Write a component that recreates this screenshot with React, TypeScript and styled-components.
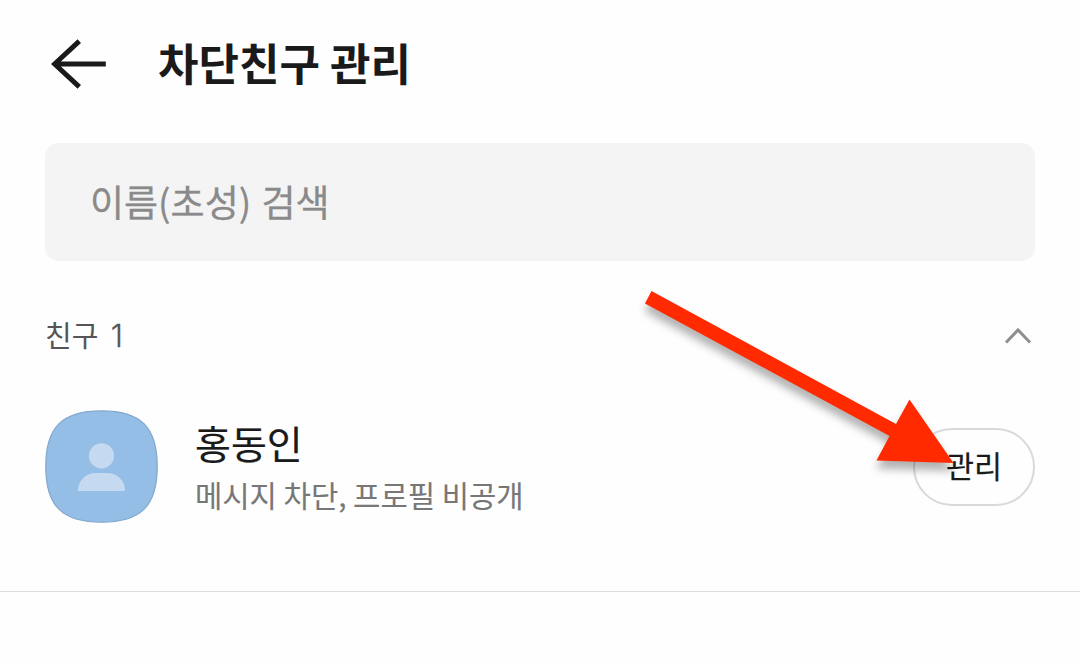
import styled, { createGlobalStyle } from "styled-components";

const GlobalStyle = createGlobalStyle`
  * {
    box-sizing: border-box;
  }

  body {
    margin: 0;
    background-color: #fefefe;
    font-family: "Noto Sans CJK KR", sans-serif;
  }
`;

const PageContainer = styled.main`
  position: relative;
  height: 664px;
  overflow: hidden;
`;

const Header = styled.header`
  height: 143px;
  padding: 32px 45px 0 51px;

  display: flex;
  align-items: flex-start;
`;

const BackButton = styled.button`
  width: 56px;
  height: 64px;
  padding: 0;
  border: none;
  background: none;
`;

const BackIcon = styled.svg`
  display: block;
  width: 56px;
  height: 64px;
`;

const Title = styled.h1`
  margin: 0 0 0 51px;
  color: #1a1a1a;
  font-size: 44px;
  font-weight: 700;
  line-height: 60px;
  white-space: nowrap;
`;

const SearchInput = styled.div`
  height: 118px;
  margin: 0 45px;
  padding: 0 45px 3px;

  display: flex;
  align-items: center;

  background-color: #f4f4f4;
  border-radius: 14px;
  color: #8a8a8a;
  font-size: 37px;
  line-height: 54px;
  word-spacing: 2px;
  white-space: nowrap;
  -webkit-text-stroke: 0.3px #8a8a8a;
`;

const SectionHeader = styled.section`
  height: 44px;
  margin: 53px 45px 0;

  display: flex;
  align-items: center;
  justify-content: space-between;
`;

const SectionTitle = styled.h2`
  margin: 0;
  padding-bottom: 2px;
  color: #555555;
  font-size: 29px;
  font-weight: 400;
  line-height: 40px;
  word-spacing: 6px;
`;

const FriendCount = styled.span`
  font-family: Inter, sans-serif;
  font-size: 31px;
  font-weight: 300;
  -webkit-text-stroke: 0.3px #555555;
`;

const ChevronIcon = styled.svg`
  width: 34px;
  height: 24px;
`;

const FriendRow = styled.article`
  height: 234px;
  padding: 52px 45px 0;

  display: flex;
  align-items: flex-start;

  border-bottom: 1px solid #dddddd;
`;

const Avatar = styled.svg`
  flex: none;
  width: 113px;
  height: 113px;
`;

const FriendInfo = styled.div`
  flex: 1;
  margin: 4px 0 0 37px;

  display: flex;
  flex-direction: column;
`;

const FriendName = styled.strong`
  color: #1a1a1a;
  font-size: 39px;
  font-weight: 400;
  line-height: 56px;
  -webkit-text-stroke: 0.2px #1a1a1a;
`;

const FriendStatus = styled.span`
  color: #777777;
  font-size: 29.7px;
  line-height: 49px;
  white-space: nowrap;
  -webkit-text-stroke: 0.1px #777777;
`;

const ManageButton = styled.button`
  width: 122px;
  height: 78px;
  margin-top: 18px;
  padding: 0 0 4px;

  background-color: #fefefe;
  border: 2px solid #d9d9d9;
  border-radius: 39px;
  color: #1a1a1a;
  font-family: inherit;
  font-size: 30.5px;
  line-height: 44px;
  -webkit-text-stroke: 0.2px #1a1a1a;
`;

const PointerArrow = styled.svg`
  position: absolute;
  top: 0;
  left: 0;
  width: 1080px;
  height: 664px;
  pointer-events: none;
  filter: drop-shadow(0 8px 4px rgba(0, 0, 0, 0.3));
`;

const App = () => {
  return (
    <>
      <GlobalStyle />
      <PageContainer>
        <Header>
          <BackButton aria-label="뒤로">
            <BackIcon viewBox="0 0 56 64" fill="none" stroke="#1a1a1a" strokeWidth="5">
              <path d="M28.3 9.2 3.6 32 28.3 54.8M3.6 32H54.8" />
            </BackIcon>
          </BackButton>
          <Title>차단친구 관리</Title>
        </Header>
        <SearchInput>이름(초성) 검색</SearchInput>
        <SectionHeader>
          <SectionTitle>
            친구 <FriendCount>1</FriendCount>
          </SectionTitle>
          <ChevronIcon viewBox="0 0 34 24" fill="none" stroke="#8f8f8f" strokeWidth="3">
            <path d="M5 18.5 17 6 29 18.5" />
          </ChevronIcon>
        </SectionHeader>
        <FriendRow>
          <Avatar viewBox="0 0 113 113">
            <path
              d="M56.5 .8C96 .8 112.2 17 112.2 56.5S96 112.2 56.5 112.2.8 96 .8 56.5 17 .8 56.5 .8Z"
              fill="#94bee5"
              stroke="#84aace"
              strokeWidth="1.3"
            />
            <circle cx="56.5" cy="45.8" r="12.6" fill="#c5daf1" />
            <path d="M33 81C33 70 41 63 51 63H62C72 63 80 70 80 81Z" fill="#c5daf1" />
          </Avatar>
          <FriendInfo>
            <FriendName>홍동인</FriendName>
            <FriendStatus>메시지 차단, 프로필 비공개</FriendStatus>
          </FriendInfo>
          <ManageButton>관리</ManageButton>
        </FriendRow>
        <PointerArrow viewBox="0 0 1080 664">
          <path
            d="M651.5 291 896 424 909.5 399.5 953.5 463 876.5 460.5 889.5 436 645 303.5Z"
            fill="#ff2a00"
          />
        </PointerArrow>
      </PageContainer>
    </>
  );
};

export default App;
